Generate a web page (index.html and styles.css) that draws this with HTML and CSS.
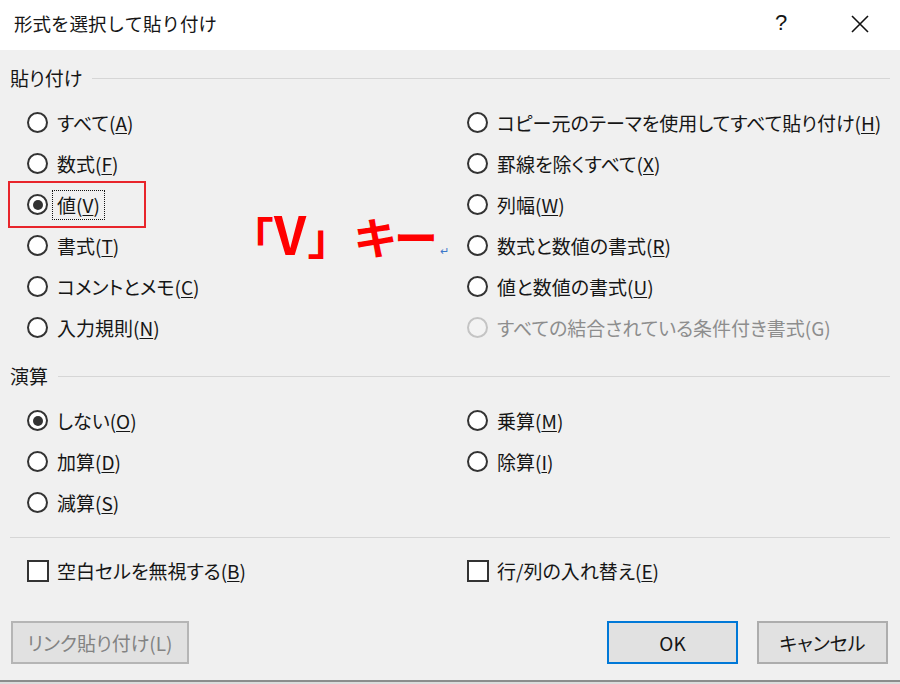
FILE: index.html
```html
<!DOCTYPE html>
<html lang="ja">
<head>
<meta charset="utf-8">
<title>形式を選択して貼り付け</title>
<link rel="stylesheet" href="styles.css">
</head>
<body>
<div class="dialog">
  <div class="titlebar">
    <div class="title">形式を選択して貼り付け</div>
    <div class="help">?</div>
    <div class="close">
      <svg width="18" height="18" viewBox="0 0 18 18"><path d="M1 1 L17 17 M17 1 L1 17" stroke="#111" stroke-width="1.6" fill="none"/></svg>
    </div>
  </div>
  <div class="content">
    <div class="group-head"><span class="group-label">貼り付け</span><span class="group-line"></span></div>
    <div class="options paste">
      <div class="opt"><span class="radio"></span><span class="txt">すべて(<u>A</u>)</span></div>
      <div class="opt"><span class="radio"></span><span class="txt">コピー元のテーマを使用してすべて貼り付け(<u>H</u>)</span></div>
      <div class="opt"><span class="radio"></span><span class="txt">数式(<u>F</u>)</span></div>
      <div class="opt"><span class="radio"></span><span class="txt">罫線を除くすべて(<u>X</u>)</span></div>
      <div class="opt"><span class="marked"><span class="radio checked"></span><span class="txt focus">値(<u>V</u>)</span></span></div>
      <div class="opt"><span class="radio"></span><span class="txt">列幅(<u>W</u>)</span></div>
      <div class="opt"><span class="radio"></span><span class="txt">書式(<u>T</u>)</span></div>
      <div class="opt"><span class="radio"></span><span class="txt">数式と数値の書式(<u>R</u>)</span></div>
      <div class="opt"><span class="radio"></span><span class="txt">コメントとメモ(<u>C</u>)</span></div>
      <div class="opt"><span class="radio"></span><span class="txt">値と数値の書式(<u>U</u>)</span></div>
      <div class="opt"><span class="radio"></span><span class="txt">入力規則(<u>N</u>)</span></div>
      <div class="opt disabled"><span class="radio"></span><span class="txt">すべての結合されている条件付き書式(G)</span></div>
      <div class="annotation">「<span class="v">V</span>」<span class="key">キー</span><span class="ret">↵</span></div>
    </div>
    <div class="group-head calc"><span class="group-label">演算</span><span class="group-line"></span></div>
    <div class="options">
      <div class="opt"><span class="radio checked"></span><span class="txt">しない(<u>O</u>)</span></div>
      <div class="opt"><span class="radio"></span><span class="txt">乗算(<u>M</u>)</span></div>
      <div class="opt"><span class="radio"></span><span class="txt">加算(<u>D</u>)</span></div>
      <div class="opt"><span class="radio"></span><span class="txt">除算(<u>I</u>)</span></div>
      <div class="opt"><span class="radio"></span><span class="txt">減算(<u>S</u>)</span></div>
    </div>
    <div class="separator"></div>
    <div class="options checks">
      <div class="opt"><span class="check"></span><span class="txt">空白セルを無視する(<u>B</u>)</span></div>
      <div class="opt"><span class="check"></span><span class="txt">行/列の入れ替え(<u>E</u>)</span></div>
    </div>
    <div class="buttons">
      <div class="btn link">リンク貼り付け(L)</div>
      <div class="btn-group">
        <div class="btn ok">OK</div>
        <div class="btn">キャンセル</div>
      </div>
    </div>
  </div>
  <div class="footer"></div>
</div>
</body>
</html>
```

FILE: styles.css
```css
* { box-sizing: border-box; }
html, body { margin: 0; padding: 0; }
body {
  font-family: "Noto Sans CJK JP", "Noto Sans", sans-serif;
  font-feature-settings: "palt";
  color: #161616;
  background: #f0f0f0;
}
.dialog {
  width: 900px;
  height: 684px;
  display: flex;
  flex-direction: column;
  overflow: hidden;
}
.titlebar {
  height: 50px;
  background: #ffffff;
  display: flex;
  align-items: center;
  padding: 0 0 4px 14px;
}
.title {
  font-size: 18.5px;
  line-height: 24px;
  flex: 1;
  font-feature-settings: normal;
}
.help {
  font-family: "Liberation Sans", sans-serif;
  font-size: 22px;
  line-height: 24px;
  width: 20px;
  text-align: center;
  margin-right: 60px;
}
.close {
  width: 18px;
  height: 18px;
  margin-right: 31px;
  margin-top: 2px;
}
.close svg { display: block; }
.content {
  flex: 1;
  background: #f0f0f0;
  padding: 0 10px;
}
.group-head {
  display: flex;
  align-items: center;
  height: 20px;
  margin-top: 18px;
}
.group-label {
  font-size: 19px;
  line-height: 20px;
}
.group-line {
  flex: 1;
  height: 1px;
  background: #d6d6d6;
  margin-left: 10px;
}
.options {
  position: relative;
  display: grid;
  grid-template-columns: 440px 1fr;
  grid-auto-rows: 41px;
  padding-left: 17px;
  margin-top: 14px;
}
.opt {
  display: flex;
  align-items: center;
  font-size: 19px;
  white-space: nowrap;
}
.txt {
  line-height: 24px;
  margin-left: 9px;
}
.txt u {
  text-decoration-thickness: 1px;
  text-underline-offset: 2px;
}
.radio {
  width: 21px;
  height: 21px;
  border-radius: 50%;
  border: 2px solid #333;
  background: #fff;
  flex: none;
  display: flex;
  align-items: center;
  justify-content: center;
}
.radio.checked::after {
  content: "";
  width: 10px;
  height: 10px;
  border-radius: 50%;
  background: #333;
}
.disabled .radio {
  border-color: #c4c4c4;
  background: #f3f3f3;
}
.disabled .txt { color: #8d8d8d; }
.marked {
  position: relative;
  display: flex;
  align-items: center;
}
.marked::before {
  content: "";
  position: absolute;
  left: -19px;
  width: 134px;
  top: -11px;
  bottom: -10px;
  border: 2px solid #e8252b;
}
.txt.focus {
  outline: 1px dotted #111;
  outline-offset: 1px;
  margin-left: 6px;
  padding: 1px 3px 1px 3px;
}
.annotation {
  position: absolute;
  left: 241px;
  top: 106px;
  font-size: 44px;
  line-height: 50px;
  font-weight: 700;
  color: #ff0000;
  white-space: nowrap;
}
.annotation .v {
  font-size: 52px;
  margin: 0 2px 0 1px;
}
.annotation .key {
  margin-left: 24px;
}
.ret {
  font-size: 11px;
  font-weight: 400;
  color: #3b78c9;
  margin-left: 3px;
}
.separator {
  height: 1px;
  background: #d6d6d6;
  margin-top: 14px;
}
.checks { margin-top: 12px; }
.check {
  width: 22px;
  height: 22px;
  border: 2px solid #333;
  background: #fff;
  flex: none;
}
.checks .txt { margin-left: 8px; }
.buttons {
  display: flex;
  margin-top: 30px;
  margin-right: 2px;
}
.btn {
  height: 43px;
  width: 131px;
  background: #e1e1e1;
  border: 2px solid #adadad;
  display: flex;
  align-items: center;
  justify-content: center;
  font-size: 19px;
  color: #161616;
}
.btn.link {
  width: 178px;
  margin-left: 1px;
  color: #838383;
  border-color: #b5b5b5;
}
.btn.ok { border-color: #0078d7; }
.btn-group {
  margin-left: auto;
  display: flex;
  gap: 19px;
}
.footer {
  height: 4px;
  border-top: 2px solid #8c8c8c;
  background: #dcdcdc;
}
```
